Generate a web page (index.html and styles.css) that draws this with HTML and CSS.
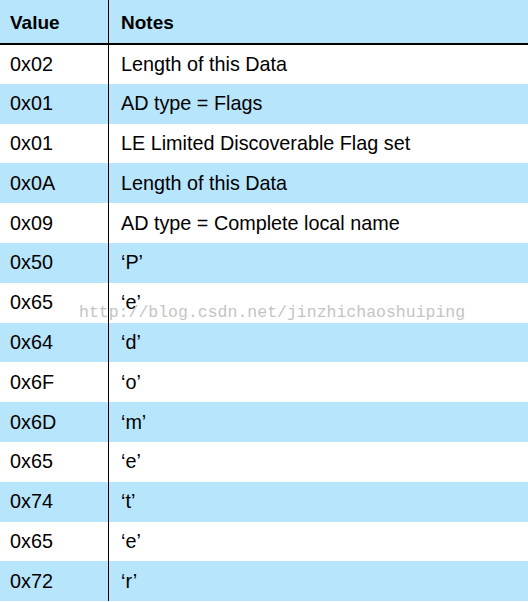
FILE: index.html
```html
<!DOCTYPE html>
<html>
<head>
<meta charset="utf-8">
<link rel="stylesheet" href="styles.css">
</head>
<body>
<div class="wrap">
<table class="tbl">
<thead>
<tr class="head"><th class="c1">Value</th><th class="c2">Notes</th></tr>
</thead>
<tbody>
<tr><td class="c1">0x02</td><td class="c2">Length of this Data</td></tr>
<tr class="blue"><td class="c1">0x01</td><td class="c2">AD type = Flags</td></tr>
<tr><td class="c1">0x01</td><td class="c2">LE Limited Discoverable Flag set</td></tr>
<tr class="blue"><td class="c1">0x0A</td><td class="c2">Length of this Data</td></tr>
<tr><td class="c1">0x09</td><td class="c2">AD type = Complete local name</td></tr>
<tr class="blue"><td class="c1">0x50</td><td class="c2">‘P’</td></tr>
<tr><td class="c1">0x65</td><td class="c2">‘e’</td></tr>
<tr class="blue"><td class="c1">0x64</td><td class="c2">‘d’</td></tr>
<tr><td class="c1">0x6F</td><td class="c2">‘o’</td></tr>
<tr class="blue"><td class="c1">0x6D</td><td class="c2">‘m’</td></tr>
<tr><td class="c1">0x65</td><td class="c2">‘e’</td></tr>
<tr class="blue"><td class="c1">0x74</td><td class="c2">‘t’</td></tr>
<tr><td class="c1">0x65</td><td class="c2">‘e’</td></tr>
<tr class="blue"><td class="c1">0x72</td><td class="c2">‘r’</td></tr>
</tbody>
</table>
<div class="watermark">http://blog.csdn.net/jinzhichaoshuiping</div>
</div>
</body>
</html>
```
FILE: styles.css
```css
html, body { margin: 0; padding: 0; background: #fff; }
.wrap { position: relative; width: 528px; height: 602px; overflow: hidden; }
.tbl {
  width: 528px;
  border-collapse: collapse;
  font-family: "Liberation Sans", Arial, sans-serif;
  font-size: 19.8px;
  color: #000;
}
.tbl th, .tbl td { padding: 0; text-align: left; vertical-align: middle; }
.head { background: #b7e5fc; height: 44px; }
.head th { font-weight: bold; font-size: 19px; border-bottom: 2px solid #000; padding-top: 2px !important; }
.tbl tbody tr { height: 39.8px; }
.blue { background: #b7e5fc; }
.c1 { width: 98px; padding-left: 10px !important; border-right: 1.5px solid #000; }
.c2 { padding-left: 12px !important; }
.watermark {
  position: absolute;
  left: 79px;
  top: 303px;
  font-family: "Liberation Mono", monospace;
  font-size: 16.5px;
  color: #c4c4c4;
  white-space: nowrap;
}
```
